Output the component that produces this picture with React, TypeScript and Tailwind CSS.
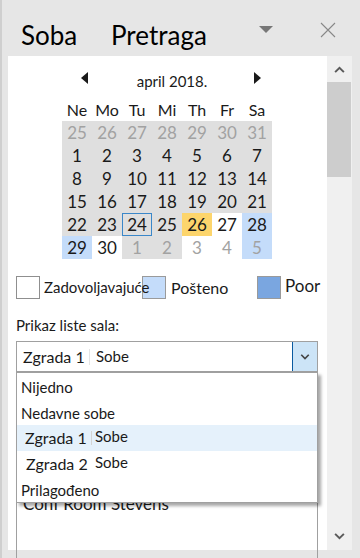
import React from 'react';

const font = { fontFamily: 'Lato, "Noto Sans", sans-serif' };

type Cell = { d: number; out?: boolean; bg?: string; ring?: boolean };

const rows: Cell[][] = [
  [25, 26, 27, 28, 29, 30, 31].map((d) => ({ d, out: true })),
  [1, 2, 3, 4, 5, 6, 7].map((d) => ({ d })),
  [8, 9, 10, 11, 12, 13, 14].map((d) => ({ d })),
  [15, 16, 17, 18, 19, 20, 21].map((d) => ({ d })),
  [
    { d: 22 },
    { d: 23 },
    { d: 24, ring: true },
    { d: 25 },
    { d: 26, bg: 'bg-[#fdd56c]' },
    { d: 27, bg: 'bg-white' },
    { d: 28, bg: 'bg-[#c4dcfa]' },
  ],
  [
    { d: 29, bg: 'bg-[#c4dcfa]' },
    { d: 30, bg: 'bg-white' },
    { d: 1, out: true },
    { d: 2, out: true },
    { d: 3, out: true, bg: 'bg-white' },
    { d: 4, out: true, bg: 'bg-white' },
    { d: 5, out: true, bg: 'bg-[#c4dcfa]' },
  ],
];

const days = ['Ne', 'Mo', 'Tu', 'Mi', 'Th', 'Fr', 'Sa'];

function Chevron({ up, className }: { up?: boolean; className?: string }) {
  return (
    <svg width="12" height="8" viewBox="0 0 12 8" className={className}>
      <path
        d={up ? 'M1 7 L6 2 L11 7' : 'M1 1 L6 6 L11 1'}
        fill="none"
        stroke="currentColor"
        strokeWidth="2.2"
      />
    </svg>
  );
}

export default function App() {
  return (
    <div
      className="w-[360px] h-[558px] bg-[#e6e6e6] border-l-2 border-[#cfcfcf] overflow-hidden text-[#1a1a1a] whitespace-nowrap"
      style={font}
    >
      {/* header */}
      <div className="h-[56px] flex items-center pl-[19px] pr-[24px] pt-[14px]">
        <span className="text-[26px] leading-none text-black w-[90px]">Soba</span>
        <span className="text-[26px] leading-none text-black">Pretraga</span>
        <svg width="14" height="8" viewBox="0 0 14 8" className="ml-auto mr-[47px] -mt-[10px]">
          <path d="M0 0 L14 0 L7 7 Z" fill="#777" />
        </svg>
        <svg width="16" height="16" viewBox="0 0 16 16" className="-mt-[10px]">
          <path d="M1 1 L15 15 M15 1 L1 15" stroke="#888" strokeWidth="1.1" />
        </svg>
      </div>

      <div className="flex h-[494px]">
        <div className="ml-[6px] w-[319px] bg-white relative">
          {/* month nav */}
          <div className="flex items-center h-[43px] pt-[8px] pl-[73px] pr-[66px]">
            <svg width="7" height="12" viewBox="0 0 7 12" className="-mt-[8px]">
              <path d="M7 0 L7 12 L0 6 Z" fill="#1a1a1a" />
            </svg>
            <span className="flex-1 text-center text-[15px] pl-[2px]">april 2018.</span>
            <svg width="7" height="12" viewBox="0 0 7 12" className="-mt-[8px]">
              <path d="M0 0 L0 12 L7 6 Z" fill="#1a1a1a" />
            </svg>
          </div>
          {/* calendar */}
          <div className="ml-[54px] w-[210px]">
            <div className="grid grid-cols-7 h-[22px] items-center">
              {days.map((d) => (
                <span key={d} className="text-center text-[16px] leading-none">
                  {d}
                </span>
              ))}
            </div>
            <div className="bg-[#dfdfdf]">
              {rows.map((r, i) => (
                <div key={i} className="grid grid-cols-7">
                  {r.map((c, j) => (
                    <div
                      key={j}
                      className={`h-[23px] flex items-center justify-center text-[17px] ${c.bg ?? ''} ${
                        c.out ? 'text-[#a2a2a2]' : 'text-[#1a1a1a]'
                      } ${c.ring ? 'border border-[#3a87c9]' : ''}`}
                    >
                      {c.d}
                    </div>
                  ))}
                </div>
              ))}
            </div>
          </div>

          {/* legend */}
          <div className="flex items-center mt-[17px] ml-[8px] h-[23px] text-[15px]">
            <div className="w-[24px] h-[23px] border border-[#8f8f8f] bg-white shrink-0" />
            <span className="ml-[4px] w-[98px] relative z-10">Zadovoljavajuće</span>
            <div className="w-[24px] h-[23px] border border-[#9a9a9a] bg-[#c4dcfa] shrink-0" />
            <span className="ml-[5px] w-[56px] text-[16px]">Pošteno</span>
            <div className="ml-[30px] w-[24px] h-[23px] border border-[#9a9a9a] bg-[#7aa6e0] shrink-0" />
            <span className="ml-[4px] -mt-[3px] text-[17px]">Poor</span>
          </div>

          <div className="ml-[8px] mt-[17px] text-[15px] leading-[18px]">Prikaz liste sala:</div>

          {/* combobox */}
          <div className="ml-[8px] mt-[7px] w-[302px] h-[31px] border border-[#a0a0a0] flex">
            <div className="flex items-center flex-1 pl-[6px]">
              <span className="text-[16px] w-[66px]">Zgrada 1</span>
              <span className="w-px h-[16px] bg-[#e4e4e4]" />
              <span className="text-[15px] ml-[6px]">Sobe</span>
            </div>
            <div className="w-[25px] bg-[#cce4f7] border-l border-[#0a5aa0] flex items-center justify-center">
              <Chevron className="text-[#444] w-[10px] h-[6px]" />
            </div>
          </div>

          {/* list below */}
          <div className="ml-[8px] w-[302px] h-[200px] border border-[#a0a0a0] pl-[6px] pt-[121px] text-[17px] leading-[20px]">
            Conf Room Stevens
          </div>

          {/* open dropdown */}
          <div className="absolute left-[8px] top-[316px] w-[302px] h-[131px] bg-white border border-[#a0a0a0] shadow-[3px_3px_3px_rgba(0,0,0,0.35)] text-[15px]">
            <div className="h-[26px] flex items-center pl-[4px] pt-[2px]">Nijedno</div>
            <div className="h-[26px] flex items-center pl-[4px] pt-[2px]">Nedavne sobe</div>
            <div className="h-[26px] flex items-center pl-[8px] bg-[#e5f1fb]">
              <span className="text-[16px] w-[66px]">Zgrada 1</span>
              <span className="w-px h-[14px] bg-[#d4d4d4]" />
              <span className="ml-[3px] -mt-[3px]">Sobe</span>
            </div>
            <div className="h-[26px] flex items-center pl-[9px]">
              <span className="text-[16px] w-[66px]">Zgrada 2</span>
              <span className="ml-[3px] -mt-[3px]">Sobe</span>
            </div>
            <div className="h-[26px] flex items-center pl-[4px]">Prilagođeno</div>
          </div>
        </div>

        {/* scrollbar */}
        <div className="w-[25px] bg-[#f0f0f0] flex flex-col items-center">
          <div className="h-[26px] flex items-center justify-center">
            <Chevron up className="text-[#5a5a5a] w-[11px] h-[7px]" />
          </div>
          <div className="w-[24px] -ml-px h-[95px] bg-[#cdcdcd]" />
          <div className="flex-1" />
          <div className="h-[26px] flex items-center justify-center pb-[2px]">
            <Chevron className="text-[#5a5a5a] w-[11px] h-[7px]" />
          </div>
        </div>
      </div>
    </div>
  );
}
